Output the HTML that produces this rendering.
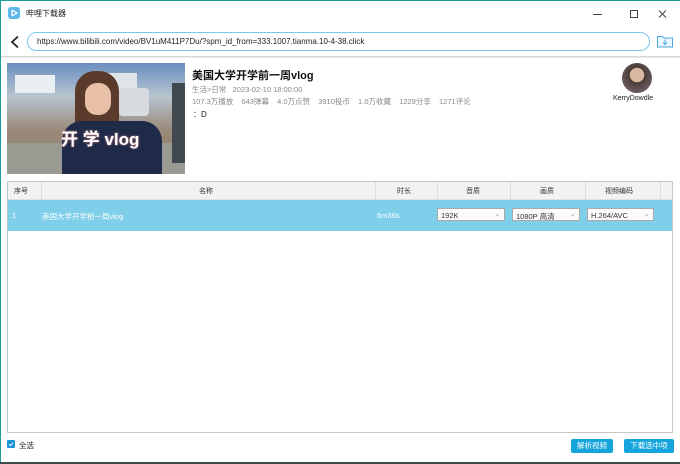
<!DOCTYPE html>
<html><head><meta charset="utf-8"><style>
*{margin:0;padding:0;box-sizing:border-box}
body{width:680px;height:464px;overflow:hidden;background:#fff;font-family:"Liberation Sans","Noto Sans CJK SC",sans-serif;position:relative;font-size:8px;color:#333}
.abs{position:absolute}
</style></head><body>
<div class="abs" style="left:0;top:0;width:680px;height:1px;background:#1a9a9a"></div>
<div class="abs" style="left:0;top:0;width:1px;height:464px;background:#1a9a9a"></div>
<div class="abs" style="left:0;top:462px;width:680px;height:2px;background:#3c4a4c"></div>
<!-- title bar -->
<div class="abs" style="left:8px;top:7px;width:12px;height:12px;border-radius:3px;background:#5cb8e8"></div>
<svg class="abs" style="left:8px;top:7px" width="12" height="12"><path d="M4 3 L4 9 M4 3 L9 6 L4 9" stroke="#fff" stroke-width="1.3" fill="none"/></svg>
<div class="abs" style="left:26px;top:8px;font-size:8px;color:#222">哔哩下载器</div>
<svg class="abs" style="left:590px;top:8px" width="85" height="12"><path d="M3 6.5h9" stroke="#444"/><path d="M40.5 2.5h7v7h-7z" stroke="#444" fill="none"/><path d="M69 2.5l7 7M76 2.5l-7 7" stroke="#444"/></svg>
<!-- url -->
<svg class="abs" style="left:9px;top:35px" width="12" height="14"><path d="M9 1.5 L3 7 L9 12.5" stroke="#222" stroke-width="1.8" fill="none"/></svg>
<div class="abs" style="left:27px;top:32px;width:623px;height:19px;border:1px solid #7cc6ea;border-radius:10px"></div>
<div class="abs" style="left:37px;top:37px;font-size:8px;color:#222">https://www.bilibili.com/video/BV1uM411P7Du/?spm_id_from=333.1007.tianma.10-4-38.click</div>
<svg class="abs" style="left:656px;top:33px" width="18" height="16"><path d="M1.5 3.5h5l1.5 1.5h8.5v9h-15z" stroke="#4aa8e0" fill="#eaf6fd"/><path d="M9 6.5v5M7 9.5l2 2 2-2" stroke="#4aa8e0" fill="none"/></svg>
<div class="abs" style="left:1px;top:56px;width:679px;height:2px;background:linear-gradient(#ccc,#f4f4f4)"></div>
<!-- thumbnail -->
<div class="abs" style="left:7px;top:63px;width:178px;height:111px;overflow:hidden;background:linear-gradient(#6a8ec0 0%,#b8c4d0 30%,#9a8a7a 60%,#8a7a6a 100%)">
<div class="abs" style="left:8px;top:12px;width:40px;height:18px;background:#e8eef2"></div>
<div class="abs" style="left:100px;top:10px;width:30px;height:25px;background:#e0e4e6"></div>
<div class="abs" style="left:0;top:80px;width:178px;height:31px;background:#9a9a92"></div>
<div class="abs" style="left:68px;top:8px;width:44px;height:60px;border-radius:20px 20px 8px 8px;background:#5a3a2a"></div>
<div class="abs" style="left:78px;top:20px;width:26px;height:32px;border-radius:12px;background:#e8c0a8"></div>
<div class="abs" style="left:55px;top:58px;width:100px;height:53px;border-radius:20px 20px 0 0;background:#1e2a48"></div>
<div class="abs" style="left:112px;top:25px;width:30px;height:28px;border-radius:4px;background:#d8dce0"></div>
<div class="abs" style="left:165px;top:20px;width:13px;height:80px;background:#404850"></div>
<div class="abs" style="left:54px;top:62px;font-size:17px;font-weight:bold;color:#fff;text-shadow:0 0 2px #d88">开 学 vlog</div>
</div>
<!-- info -->
<div class="abs" style="left:192px;top:67px;font-size:11px;font-weight:bold;color:#111">美国大学开学前一周vlog</div>
<div class="abs" style="left:192px;top:84px;font-size:7.5px;color:#888">生活&gt;日常 &nbsp; 2023-02-10 18:00:00</div>
<div class="abs" style="left:192px;top:96px;font-size:7.5px;color:#888;word-spacing:2px">107.3万播放&nbsp; 643弹幕&nbsp; 4.0万点赞&nbsp; 3910投币&nbsp; 1.0万收藏&nbsp; 1229分享&nbsp; 1271评论</div>
<div class="abs" style="left:193px;top:109px;font-size:8px;color:#222">：D</div>
<div class="abs" style="left:622px;top:63px;width:30px;height:30px;border-radius:50%;background:radial-gradient(circle at 50% 40%,#d8b8a0 0 30%,#4a3a36 32%,#6a5a60 70%,#2a2a40)"></div>
<div class="abs" style="left:613px;top:95px;font-size:7px;color:#222">KerryDowdle</div>
<!-- table -->
<div class="abs" style="left:7px;top:181px;width:666px;height:252px;border:1px solid #c8c8c8"></div>
<div class="abs" style="left:8px;top:182px;width:664px;height:18px;background:#f2f2f2;border-bottom:1px solid #e0e0e0"></div>
<div class="abs" style="left:41px;top:182px;width:1px;height:18px;background:#ddd"></div>
<div class="abs" style="left:375px;top:182px;width:1px;height:18px;background:#ddd"></div>
<div class="abs" style="left:437px;top:182px;width:1px;height:18px;background:#ddd"></div>
<div class="abs" style="left:510px;top:182px;width:1px;height:18px;background:#ddd"></div>
<div class="abs" style="left:585px;top:182px;width:1px;height:18px;background:#ddd"></div>
<div class="abs" style="left:660px;top:182px;width:1px;height:18px;background:#ddd"></div>
<div class="abs" style="top:186px;left:14px;font-size:7px">序号</div>
<div class="abs" style="top:186px;left:199px;font-size:7px">名称</div>
<div class="abs" style="top:186px;left:397px;font-size:7px">时长</div>
<div class="abs" style="top:186px;left:466px;font-size:7px">音质</div>
<div class="abs" style="top:186px;left:540px;font-size:7px">画质</div>
<div class="abs" style="top:186px;left:605px;font-size:7px">视频编码</div>
<div class="abs" style="left:8px;top:200px;width:664px;height:31px;background:#7fcfea"></div>
<div class="abs" style="top:211px;left:12px;font-size:7.5px;color:#fff">1</div>
<div class="abs" style="top:211px;left:42px;font-size:7.5px;color:#fff">美国大学开学前一周vlog</div>
<div class="abs" style="top:211px;left:377px;font-size:7.5px;color:#fff">5m36s</div>
<div class="abs" style="left:437px;top:208px;width:68px;height:13px;background:#fbfbfb;border:1px solid #aaa;font-size:7.5px;padding:2px 3px">192K<span style="position:absolute;right:4px;top:2px;font-size:6px;color:#888">⌄</span></div>
<div class="abs" style="left:512px;top:208px;width:68px;height:13px;background:#fbfbfb;border:1px solid #aaa;font-size:7.5px;padding:2px 3px">1080P 高清<span style="position:absolute;right:4px;top:2px;font-size:6px;color:#888">⌄</span></div>
<div class="abs" style="left:587px;top:208px;width:67px;height:13px;background:#fbfbfb;border:1px solid #aaa;font-size:7.5px;padding:2px 3px">H.264/AVC<span style="position:absolute;right:4px;top:2px;font-size:6px;color:#888">⌄</span></div>
<!-- bottom -->
<div class="abs" style="left:7px;top:440px;width:8px;height:8px;background:#1e90d8;border-radius:1px"></div>
<svg class="abs" style="left:7px;top:440px" width="8" height="8"><path d="M2 4.2l1.5 1.5 2.8-3" stroke="#fff" fill="none"/></svg>
<div class="abs" style="left:19px;top:440px;font-size:7.5px;color:#222">全选</div>
<div class="abs" style="left:571px;top:439px;width:42px;height:14px;background:#16a4dc;border-radius:2px;color:#fff;font-size:7.5px;text-align:center;line-height:14px">解析视频</div>
<div class="abs" style="left:624px;top:439px;width:50px;height:14px;background:#16a4dc;border-radius:2px;color:#fff;font-size:7.5px;text-align:center;line-height:14px">下载选中项</div>
</body></html>
